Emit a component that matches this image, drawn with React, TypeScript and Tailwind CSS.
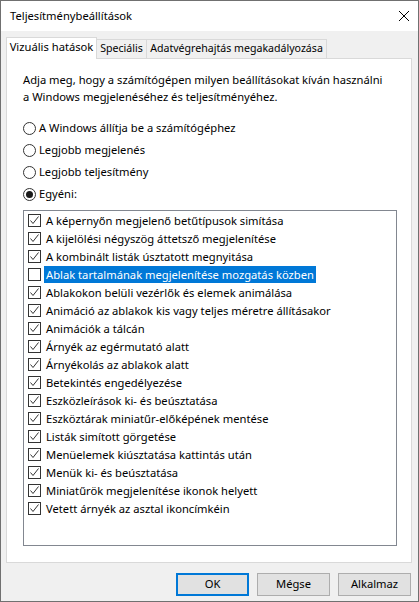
import React from "react";

const options: [string, boolean][] = [
  ["A képernyőn megjelenő betűtípusok simítása", true],
  ["A kijelölési négyszög áttetsző megjelenítése", true],
  ["A kombinált listák úsztatott megnyitása", true],
  ["Ablak tartalmának megjelenítése mozgatás közben", false],
  ["Ablakokon belüli vezérlők és elemek animálása", true],
  ["Animáció az ablakok kis vagy teljes méretre állításakor", true],
  ["Animációk a tálcán", true],
  ["Árnyék az egérmutató alatt", true],
  ["Árnyékolás az ablakok alatt", true],
  ["Betekintés engedélyezése", true],
  ["Eszközleírások ki- és beúsztatása", true],
  ["Eszköztárak miniatűr-előképének mentése", true],
  ["Listák simított görgetése", true],
  ["Menüelemek kiúsztatása kattintás után", true],
  ["Menük ki- és beúsztatása", true],
  ["Miniatűrök megjelenítése ikonok helyett", true],
  ["Vetett árnyék az asztal ikoncímkéin", true],
];

const radios = [
  "A Windows állítja be a számítógéphez",
  "Legjobb megjelenés",
  "Legjobb teljesítmény",
  "Egyéni:",
];

function CheckBox({ checked }: { checked: boolean }) {
  return (
    <span className="w-[13px] h-[13px] border border-[#333333] bg-white flex items-center justify-center shrink-0">
      {checked && (
        <svg width="11" height="11" viewBox="0 0 11 11">
          <path d="M1.5 5.5 L4 8.5 L9.5 1.5" stroke="#333333" strokeWidth="1" fill="none" />
        </svg>
      )}
    </span>
  );
}

function Radio({ selected }: { selected: boolean }) {
  return (
    <span className="w-[13px] h-[13px] rounded-full border border-[#333333] bg-white flex items-center justify-center shrink-0">
      {selected && <span className="w-[7px] h-[7px] rounded-full bg-[#1a1a1a]" />}
    </span>
  );
}

export default function App() {
  return (
    <div className="w-[419px] h-[602px] border border-[#707070] bg-[#f0f0f0] flex flex-col font-['Noto_Sans',sans-serif] text-[11.2px] text-black overflow-hidden whitespace-nowrap">
      {/* title bar */}
      <div className="h-[30px] bg-white flex items-center justify-between pl-[9px] pr-[9px] shrink-0">
        <span>Teljesítménybeállítások</span>
        <svg width="10" height="10" viewBox="0 0 10 10">
          <path d="M0 0 L10 10 M10 0 L0 10" stroke="#000" strokeWidth="1" />
        </svg>
      </div>

      <div className="flex-1 flex flex-col pl-[5px] pr-[6px] pt-[6px]">
        {/* tabs */}
        <div className="flex items-end h-[21px] text-[10.6px]">
          <div className="relative z-10 h-[22px] -mb-px w-[91px] bg-white border border-b-0 border-[#d9d9d9] flex items-center justify-center pb-[2px] text-[11.2px]">
            Vizuális hatások
          </div>
          <div className="h-[19px] w-[50px] border-t border-r border-[#d9d9d9] flex items-center justify-center">
            Speciális
          </div>
          <div className="h-[19px] w-[180px] border-t border-r border-[#d9d9d9] flex items-center justify-center">
            Adatvégrehajtás megakadályozása
          </div>
        </div>

        {/* panel */}
        <div className="h-[505px] bg-white border border-[#d9d9d9] pl-[16px] pt-[12px]">
          <p className="leading-[17px]">
            Adja meg, hogy a számítógépen milyen beállításokat kíván használni
            <br />
            a Windows megjelenéséhez és teljesítményéhez.
          </p>

          <div className="mt-[12px] flex flex-col">
            {radios.map((r, i) => (
              <div key={r} className="h-[22px] flex items-center gap-[3px]">
                <Radio selected={i === 3} />
                <span>{r}</span>
              </div>
            ))}
          </div>

          <div className="mt-[5px] w-[374px] h-[336px] border border-[#828790] flex flex-col">
            {options.map(([label, checked], i) => (
              <div key={label} className="h-[18px] flex items-center pl-[4px] gap-[3px] shrink-0">
                <CheckBox checked={checked} />
                <span
                  className={
                    i === 3
                      ? "px-[2px] leading-[17px] bg-[#0078d7] text-white"
                      : "px-[2px] leading-[17px]"
                  }
                >
                  {label}
                </span>
              </div>
            ))}
          </div>
        </div>

        {/* buttons */}
        <div className="mt-[10px] flex justify-end gap-[8px] pr-[1px]">
          <button className="w-[73px] h-[23px] bg-[#e1e1e1] border-2 border-[#0078d7] flex items-center justify-center">
            OK
          </button>
          <button className="w-[73px] h-[23px] bg-[#e1e1e1] border border-[#adadad] flex items-center justify-center">
            Mégse
          </button>
          <button className="w-[73px] h-[23px] bg-[#e1e1e1] border border-[#adadad] flex items-center justify-center">
            Alkalmaz
          </button>
        </div>
      </div>
    </div>
  );
}
